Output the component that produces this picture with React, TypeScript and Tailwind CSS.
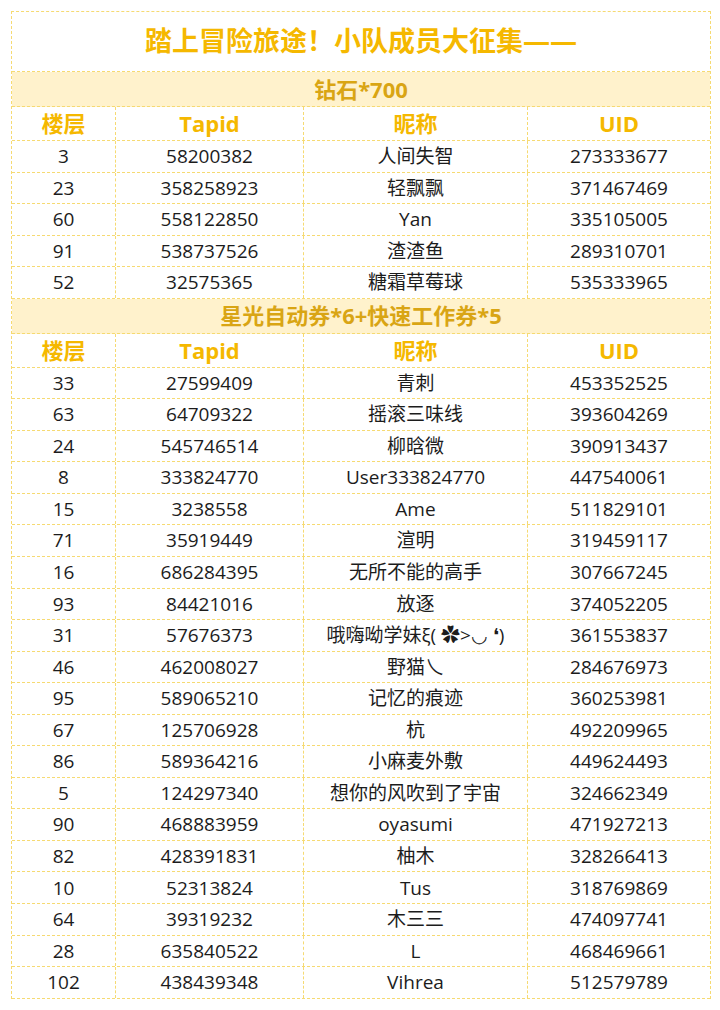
import React from 'react';

const diamond = [
  ['3', '58200382', '人间失智', '273333677'],
  ['23', '358258923', '轻飘飘', '371467469'],
  ['60', '558122850', 'Yan', '335105005'],
  ['91', '538737526', '渣渣鱼', '289310701'],
  ['52', '32575365', '糖霜草莓球', '535333965'],
];

const tickets = [
  ['33', '27599409', '青刺', '453352525'],
  ['63', '64709322', '摇滚三味线', '393604269'],
  ['24', '545746514', '柳晗微', '390913437'],
  ['8', '333824770', 'User333824770', '447540061'],
  ['15', '3238558', 'Ame', '511829101'],
  ['71', '35919449', '渲明', '319459117'],
  ['16', '686284395', '无所不能的高手', '307667245'],
  ['93', '84421016', '放逐', '374052205'],
  ['31', '57676373', '哦嗨呦学妹ξ( ✿>◡ ❛)', '361553837'],
  ['46', '462008027', '野猫乀', '284676973'],
  ['95', '589065210', '记忆的痕迹', '360253981'],
  ['67', '125706928', '杭', '492209965'],
  ['86', '589364216', '小麻麦外敷', '449624493'],
  ['5', '124297340', '想你的风吹到了宇宙', '324662349'],
  ['90', '468883959', 'oyasumi', '471927213'],
  ['82', '428391831', '柚木', '328266413'],
  ['10', '52313824', 'Tus', '318769869'],
  ['64', '39319232', '木三三', '474097741'],
  ['28', '635840522', 'L', '468469661'],
  ['102', '438439348', 'Vihrea', '512579789'],
];

const cols = 'grid grid-cols-[104px_188px_224px_182px]';

// section header + column titles + rows
const Section = ({ title, rows }: { title: string; rows: string[][] }) => (
  <>
    <div className="h-[35px] flex items-center justify-center bg-[#fff2cc] border-b border-dashed border-[#f6da72] text-[22px] font-bold text-[#d9a514]">
      {title}
    </div>
    <div className={`${cols} h-[34px] border-b border-dashed border-[#f6da72] text-[22px] font-bold text-[#f5b800]`}>
      {['楼层', 'Tapid', '昵称', 'UID'].map((h, i) => (
        <div key={h} className={`flex items-center justify-center ${i < 3 ? 'border-r border-dashed border-[#f6da72]' : ''}`}>
          {h}
        </div>
      ))}
    </div>
    {rows.map((r, idx) => (
      <div key={idx} className={`${cols} h-[31.56px] border-b border-dashed border-[#f6da72] text-[19px] text-[#1c1c1c]`}>
        {r.map((c, i) => (
          <div key={i} className={`flex items-center justify-center whitespace-nowrap ${i < 3 ? 'border-r border-dashed border-[#f6da72]' : ''}`}>
            {c}
          </div>
        ))}
      </div>
    ))}
  </>
);

export default function App() {
  return (
    <div className="w-[720px] h-[1010px] bg-white pt-[11px] pl-[11px]" style={{ fontFamily: '"Open Sans", "Noto Sans CJK SC", sans-serif' }}>
      <div className="w-[700px] border border-b-0 border-dashed border-[#f6da72]">
        <div className="h-[60px] flex items-center justify-center border-b border-dashed border-[#f6da72] text-[27px] font-bold text-[#f5b800]">
          踏上冒险旅途！小队成员大征集——
        </div>
        <Section title="钻石*700" rows={diamond} />
        <Section title="星光自动券*6+快速工作券*5" rows={tickets} />
      </div>
    </div>
  );
}
